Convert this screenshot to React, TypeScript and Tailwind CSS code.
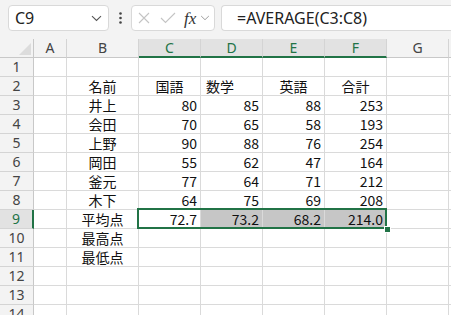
import React from 'react';

const GREEN = '#217346';

const cols = [
  { key: 'A', w: 'w-[33px]' },
  { key: 'B', w: 'w-[72px]' },
  { key: 'C', w: 'w-[62px]' },
  { key: 'D', w: 'w-[62px]' },
  { key: 'E', w: 'w-[62px]' },
  { key: 'F', w: 'w-[62px]' },
  { key: 'G', w: 'w-[62px]' },
];

const selectedCols = ['C', 'D', 'E', 'F'];

type Cell = { text: string; align: 'left' | 'center' | 'right' };

const rows: Record<number, Record<string, Cell>> = {
  2: {
    B: { text: '名前', align: 'center' },
    C: { text: '国語', align: 'center' },
    D: { text: '数学', align: 'left' },
    E: { text: '英語', align: 'center' },
    F: { text: '合計', align: 'center' },
  },
};

const data: [string, string[]][] = [
  ['井上', ['80', '85', '88', '253']],
  ['会田', ['70', '65', '58', '193']],
  ['上野', ['90', '88', '76', '254']],
  ['岡田', ['55', '62', '47', '164']],
  ['釜元', ['77', '64', '71', '212']],
  ['木下', ['64', '75', '69', '208']],
  ['平均点', ['72.7', '73.2', '68.2', '214.0']],
];

data.forEach(([name, nums], i) => {
  const r: Record<string, Cell> = { B: { text: name, align: 'center' } };
  ['C', 'D', 'E', 'F'].forEach((c, j) => (r[c] = { text: nums[j], align: 'right' }));
  rows[3 + i] = r;
});
rows[10] = { B: { text: '最高点', align: 'center' } };
rows[11] = { B: { text: '最低点', align: 'center' } };

const cellFont = { fontFamily: '"Noto Sans CJK JP", "Noto Sans", sans-serif' };
const uiFont = { fontFamily: '"Noto Sans", "Open Sans", sans-serif' };

const Chevron = () => (
  <svg width="11" height="7" viewBox="0 0 11 7" fill="none">
    <path d="M1 1.2l4.5 4.3L10 1.2" stroke="#555" strokeWidth="1.1" />
  </svg>
);

const TopBar = () => (
  <div className="h-[39px] bg-[#f3f3f3] flex items-start pt-[5px] pl-[8px]" style={uiFont}>
    <div className="w-[101px] h-[26px] rounded-[4px] border border-[#d9d9d9] bg-white flex items-center justify-between pl-[6px] pr-[6px]">
      <span className="text-[16px] text-[#222] leading-none">C9</span>
      <Chevron />
    </div>
    <div className="w-[22px] h-[26px] flex items-center justify-center">
      <svg width="3" height="12" viewBox="0 0 3 12">
        <circle cx="1.5" cy="1.5" r="1.3" fill="#444" />
        <circle cx="1.5" cy="6" r="1.3" fill="#444" />
        <circle cx="1.5" cy="10.5" r="1.3" fill="#444" />
      </svg>
    </div>
    <div className="w-[84px] h-[26px] rounded-[4px] border border-[#d9d9d9] bg-white flex items-center pl-[5px]">
      <svg width="12" height="12" viewBox="0 0 12 12" className="ml-[1px]">
        <path d="M1 1l10 10M11 1L1 11" stroke="#c4c4c4" strokeWidth="1.1" />
      </svg>
      <svg width="16" height="12" viewBox="0 0 16 12" className="ml-[10px]">
        <path d="M1 6l4.5 4.5L15 1" stroke="#c4c4c4" strokeWidth="1.1" fill="none" />
      </svg>
      <span
        className="ml-[8px] text-[17px] italic text-[#333] leading-none"
        style={{ fontFamily: '"Liberation Serif", "DejaVu Serif", serif' }}
      >
        fx
      </span>
      <span className="ml-[4px] flex items-center">
        <svg width="10" height="6" viewBox="0 0 11 7" fill="none">
          <path d="M1 1.2l4.5 4.3L10 1.2" stroke="#999" strokeWidth="1.1" />
        </svg>
      </span>
    </div>
    <div className="flex-1 ml-[6px] h-[26px] rounded-l-[4px] border border-r-0 border-[#d9d9d9] bg-white flex items-center pl-[15px]">
      <span className="text-[16px] text-[#222] leading-none">=AVERAGE(C3:C8)</span>
    </div>
  </div>
);

const HeaderRow = () => (
  <div className="flex h-[19px] bg-[#f3f3f3]" style={uiFont}>
    <div className="w-[34px] shrink-0 border-r border-b border-[#c8c8c8] flex items-end justify-end pr-[2px] pb-[2px]">
      <svg width="12" height="12" viewBox="0 0 12 12">
        <polygon points="12,0 12,12 0,12" fill="#dcdcdc" />
      </svg>
    </div>
    {cols.map((c) => {
      const sel = selectedCols.includes(c.key);
      return (
        <div
          key={c.key}
          className={`${c.w} shrink-0 border-r border-[#d4d4d4] flex items-center justify-center text-[14px] leading-none ${
            sel ? 'bg-[#e2e2e2] text-[#217346] border-b-2 border-b-[#217346]' : 'text-[#444] border-b border-b-[#c8c8c8]'
          }`}
        >
          {c.key}
        </div>
      );
    })}
    <div className="flex-1 border-b border-[#c8c8c8]" />
  </div>
);

const Row = ({ n }: { n: number }) => {
  const sel = n === 9;
  const r = rows[n] || {};
  return (
    <div className="flex h-[19px]">
      <div
        className={`w-[34px] shrink-0 border-b border-[#d4d4d4] flex items-center justify-center text-[14px] leading-none ${
          sel ? 'bg-[#e2e2e2] text-[#217346] border-r-2 border-r-[#217346]' : 'bg-[#f3f3f3] text-[#444] border-r border-r-[#c8c8c8]'
        }`}
        style={uiFont}
      >
        {n}
      </div>
      {cols.map((c) => {
        const cell = r[c.key];
        const gray = sel && ['D', 'E', 'F'].includes(c.key);
        return (
          <div
            key={c.key}
            className={`${c.w} shrink-0 border-r border-b border-[#dadada] flex items-center text-[14px] leading-none text-[#111] ${
              gray ? 'bg-[#c6c6c6]' : ''
            } ${
              cell?.align === 'right' ? 'justify-end pr-[3px]' : cell?.align === 'left' ? 'justify-start pl-[5px]' : 'justify-center'
            }`}
            style={cellFont}
          >
            {cell?.text}
          </div>
        );
      })}
      <div className="flex-1 border-b border-[#dadada]" />
    </div>
  );
};

export default function App() {
  const nums = Array.from({ length: 14 }, (_, i) => i + 1);
  return (
    <div className="w-[451px] h-[315px] overflow-hidden bg-white">
      <TopBar />
      <HeaderRow />
      <div className="relative">
        {nums.map((n) => (
          <Row key={n} n={n} />
        ))}
        {/* selection outline C9:F9 */}
        <div className="absolute left-[137px] top-[150px] w-[250px] h-[21px] border-2 border-[#217346] pointer-events-none" />
        <div className="absolute left-[384px] top-[168px] w-[5px] h-[5px] bg-[#217346] border border-white box-content" />
      </div>
    </div>
  );
}
